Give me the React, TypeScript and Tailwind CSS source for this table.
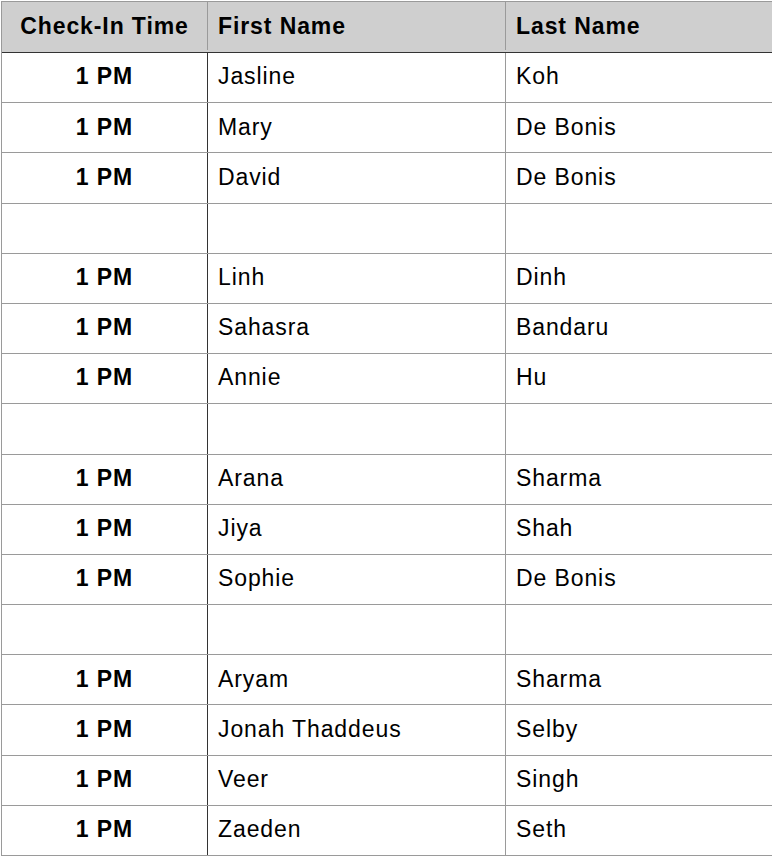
const rows: [string, string, string][] = [
  ["1 PM", "Jasline", "Koh"],
  ["1 PM", "Mary", "De Bonis"],
  ["1 PM", "David", "De Bonis"],
  ["", "", ""],
  ["1 PM", "Linh", "Dinh"],
  ["1 PM", "Sahasra", "Bandaru"],
  ["1 PM", "Annie", "Hu"],
  ["", "", ""],
  ["1 PM", "Arana", "Sharma"],
  ["1 PM", "Jiya", "Shah"],
  ["1 PM", "Sophie", "De Bonis"],
  ["", "", ""],
  ["1 PM", "Aryam", "Sharma"],
  ["1 PM", "Jonah Thaddeus", "Selby"],
  ["1 PM", "Veer", "Singh"],
  ["1 PM", "Zaeden", "Seth"],
];

export default function App() {
  return (
    <div
      className="w-[772px] h-[856px] overflow-hidden bg-white pt-px pl-px text-black"
      style={{ fontFamily: '"Liberation Sans", Arial, sans-serif' }}
    >
      <div className="w-[790px] border-t border-l border-[#9a9a9a]">
        {/* header */}
        <div className="flex h-[51px] pb-[2px] bg-[#cfcfcf] border-b border-[#333] text-[23px] font-bold tracking-[0.9px]">
          <div className="w-[206px] shrink-0 flex items-center justify-center border-r border-[#9a9a9a]">
            Check-In Time
          </div>
          <div className="w-[298px] shrink-0 flex items-center pl-[10px] border-r border-[#9a9a9a]">
            First Name
          </div>
          <div className="flex-1 flex items-center pl-[10px]">Last Name</div>
        </div>

        {rows.map(([time, first, last], i) => (
          <div key={i} className="flex h-[50.19px] border-b border-[#9a9a9a] text-[23px] tracking-[0.9px]">
            <div className="w-[206px] shrink-0 flex items-center justify-center pb-[2px] border-r border-[#333] font-bold">
              {time}
            </div>
            <div className="w-[298px] shrink-0 flex items-center pl-[10px] pb-[2px] border-r border-[#9a9a9a]">
              {first}
            </div>
            <div className="flex-1 flex items-center pl-[10px] pb-[2px]">{last}</div>
          </div>
        ))}
      </div>
    </div>
  );
}
